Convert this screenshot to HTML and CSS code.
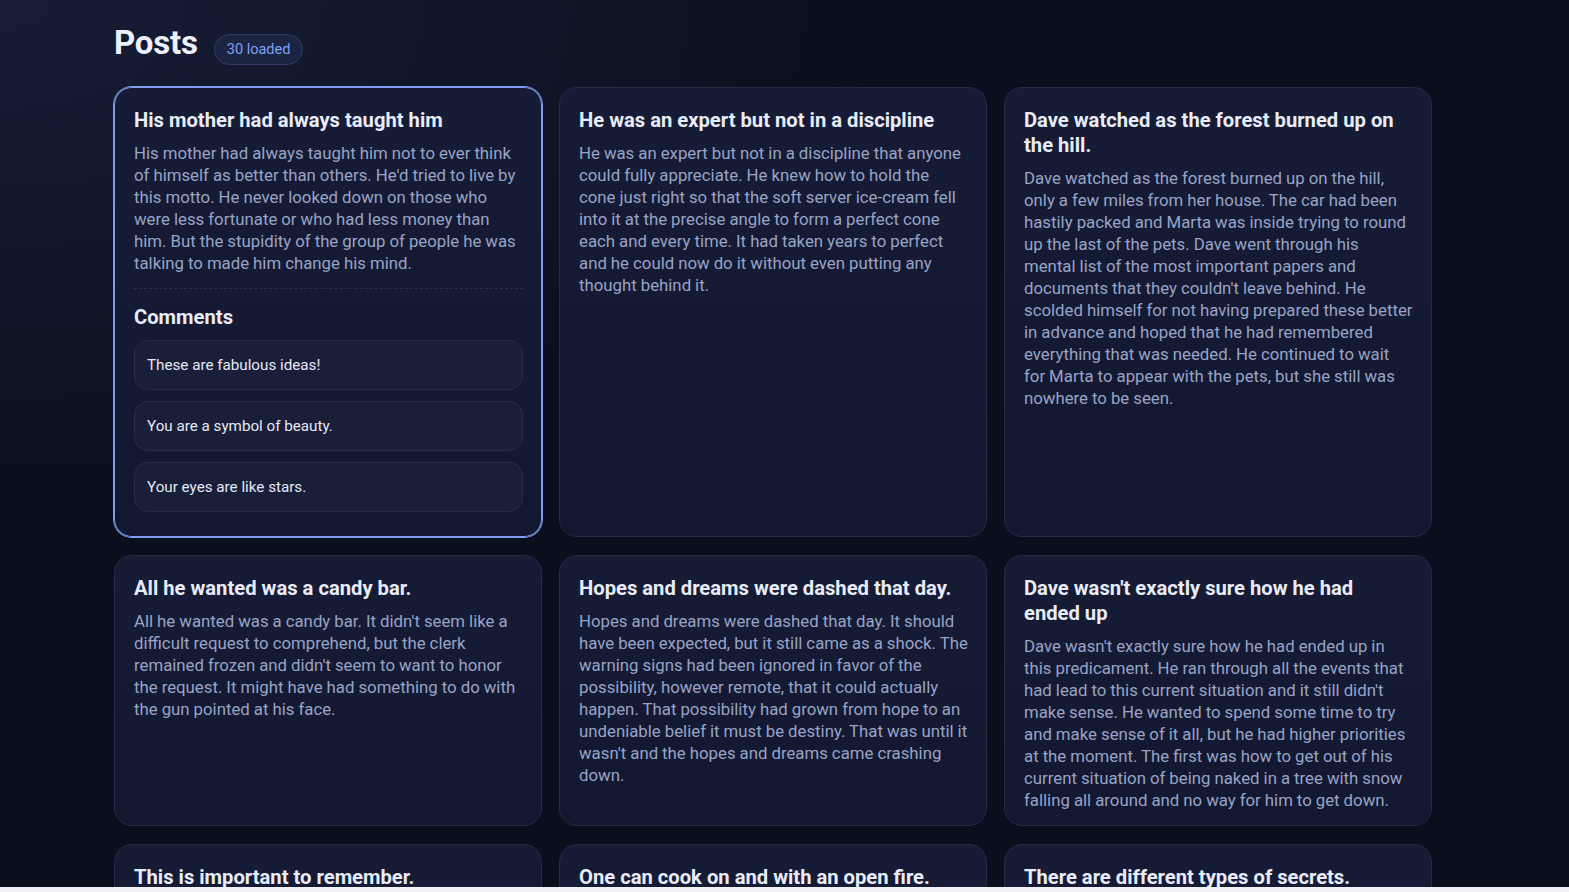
FILE: index.html
```html
<!DOCTYPE html>
<html lang="en">
<head>
<meta charset="utf-8">
<title>Posts</title>
<link rel="stylesheet" href="styles.css">
</head>
<body>
<div class="app">
  <main class="page">
    <header class="page-head">
      <h1 class="page-title">Posts</h1>
      <span class="badge">30 loaded</span>
    </header>
    <section class="grid">
      <article class="card card-active">
        <h2 class="card-title">His mother had always taught him</h2>
        <p class="card-body">His mother had always taught him not to ever think of himself as better than others. He'd tried to live by this motto. He never looked down on those who were less fortunate or who had less money than him. But the stupidity of the group of people he was talking to made him change his mind.</p>
        <div class="comments">
          <h3 class="comments-title">Comments</h3>
          <ul class="comment-list">
            <li class="comment">These are fabulous ideas!</li>
            <li class="comment">You are a symbol of beauty.</li>
            <li class="comment">Your eyes are like stars.</li>
          </ul>
        </div>
      </article>
      <article class="card">
        <h2 class="card-title">He was an expert but not in a discipline</h2>
        <p class="card-body">He was an expert but not in a discipline that anyone could fully appreciate. He knew how to hold the cone just right so that the soft server ice-cream fell into it at the precise angle to form a perfect cone each and every time. It had taken years to perfect and he could now do it without even putting any thought behind it.</p>
      </article>
      <article class="card">
        <h2 class="card-title">Dave watched as the forest burned up on the hill.</h2>
        <p class="card-body">Dave watched as the forest burned up on the hill, only a few miles from her house. The car had been hastily packed and Marta was inside trying to round up the last of the pets. Dave went through his mental list of the most important papers and documents that they couldn't leave behind. He scolded himself for not having prepared these better in advance and hoped that he had remembered everything that was needed. He continued to wait for Marta to appear with the pets, but she still was nowhere to be seen.</p>
      </article>
      <article class="card">
        <h2 class="card-title">All he wanted was a candy bar.</h2>
        <p class="card-body">All he wanted was a candy bar. It didn't seem like a difficult request to comprehend, but the clerk remained frozen and didn't seem to want to honor the request. It might have had something to do with the gun pointed at his face.</p>
      </article>
      <article class="card">
        <h2 class="card-title">Hopes and dreams were dashed that day.</h2>
        <p class="card-body">Hopes and dreams were dashed that day. It should have been expected, but it still came as a shock. The warning signs had been ignored in favor of the possibility, however remote, that it could actually happen. That possibility had grown from hope to an undeniable belief it must be destiny. That was until it wasn't and the hopes and dreams came crashing down.</p>
      </article>
      <article class="card">
        <h2 class="card-title">Dave wasn't exactly sure how he had ended up</h2>
        <p class="card-body">Dave wasn't exactly sure how he had ended up in this predicament. He ran through all the events that had lead to this current situation and it still didn't make sense. He wanted to spend some time to try and make sense of it all, but he had higher priorities at the moment. The first was how to get out of his current situation of being naked in a tree with snow falling all around and no way for him to get down.</p>
      </article>
      <article class="card">
        <h2 class="card-title">This is important to remember.</h2>
        <p class="card-body">This is important to remember. Love isn't like pie. You don't need to divide it among all your friends and loved ones. No matter how much love you give, you can always give more. It doesn't run out, so don't try to hold back giving it as if it may one day run out. Give it freely and as much as you want.</p>
      </article>
      <article class="card">
        <h2 class="card-title">One can cook on and with an open fire.</h2>
        <p class="card-body">One can cook on and with an open fire. These are some of the ways to cook with fire outside. Cooking meat using a spit is a great way to evenly cook meat. In order to keep meat from burning, it's best to slowly rotate it.</p>
      </article>
      <article class="card">
        <h2 class="card-title">There are different types of secrets.</h2>
        <p class="card-body">There are different types of secrets. She had held onto plenty of them during her life, but this one was different. She found herself holding onto the deepest secret of her life, and it was eating away at her.</p>
      </article>
    </section>
  </main>
</div>
</body>
</html>
```

FILE: styles.css
```css
* { box-sizing: border-box; }

html, body {
  margin: 0;
  padding: 0;
}

body {
  background: #f0f1f5;
  font-family: "Segoe UI", Roboto, "Noto Sans", sans-serif;
  height: 892px;
  overflow: hidden;
}

.app {
  height: 887px;
  overflow: hidden;
  background:
    radial-gradient(ellipse 900px 520px at 0% 0%, #171d36 0%, rgba(23,29,54,0) 100%),
    #0a0f1e;
}

.page {
  width: 1318px;
  margin-left: 114px;
  padding-top: 22px;
}

.page-head {
  display: flex;
  align-items: center;
  gap: 16px;
  height: 42px;
  margin-bottom: 23px;
}

.page-title {
  margin: 0;
  font-size: 33px;
  font-weight: 700;
  color: #eef1fb;
  letter-spacing: -0.2px;
  line-height: 42px;
}

.badge {
  display: inline-flex;
  align-items: center;
  height: 31px;
  padding: 0 12px;
  margin-top: 12px;
  border-radius: 16px;
  background: #1b2542;
  border: 1px solid #2f3b62;
  color: #7fa0f4;
  font-size: 14.5px;
}

.grid {
  display: grid;
  grid-template-columns: repeat(3, 1fr);
  gap: 18px 17px;
  align-items: stretch;
}

.card {
  background: linear-gradient(180deg, #171c36 0%, #131831 100%);
  border: 1px solid #242b49;
  border-radius: 18px;
  padding: 20px 18px 14px 19px;
}

.card-active {
  border-color: #7e9df0;
  box-shadow: 0 0 0 1px #7e9df0;
}

.card-title {
  margin: 0 0 9px;
  font-size: 20.2px;
  line-height: 25px;
  font-weight: 700;
  color: #e8ecf9;
}

.card-body {
  margin: 0;
  font-size: 16.8px;
  line-height: 22px;
  word-spacing: -0.15px;
  color: #98a3c6;
}

.comments {
  margin-top: 14px;
  padding-top: 16px;
  border-top: 1px dashed #2a3152;
}

.comments-title {
  margin: 0 0 10px;
  font-size: 20.2px;
  line-height: 25px;
  font-weight: 700;
  color: #e8ecf9;
}

.comment-list {
  list-style: none;
  margin: 0 0 10px;
  padding: 0;
  display: flex;
  flex-direction: column;
  gap: 11px;
}

.comment {
  background: #191e39;
  border: 1px solid #262d4b;
  border-radius: 14px;
  padding: 13px 12px;
  font-size: 15.2px;
  line-height: 22px;
  color: #e4e8f5;
}
```
